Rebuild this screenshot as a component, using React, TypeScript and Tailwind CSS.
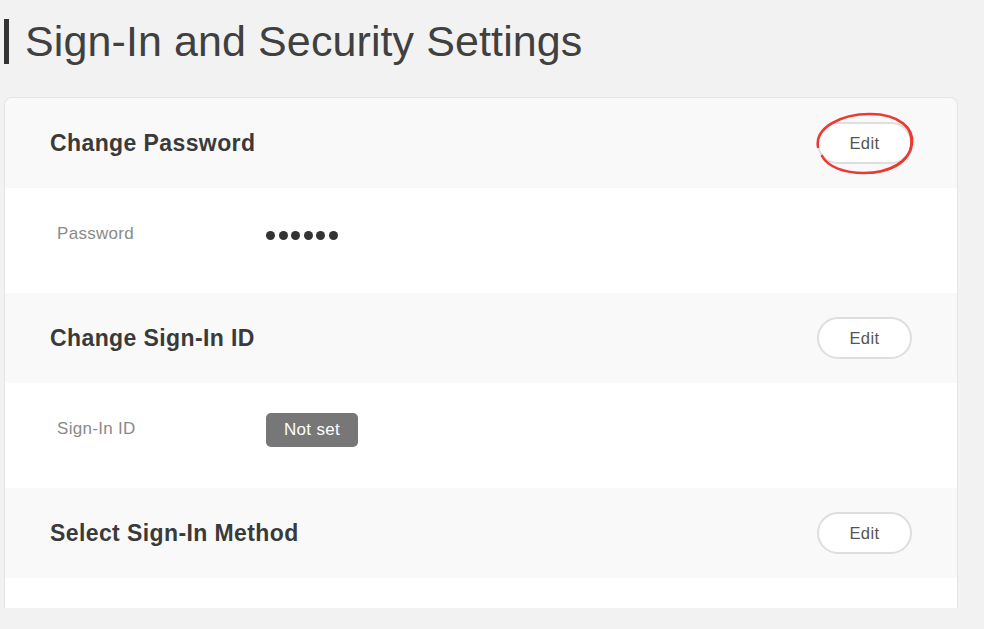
import React from "react";

function EditButton({ circled }: { circled?: boolean }) {
  return (
    <div className="relative">
      <button className="w-[95px] h-[42px] rounded-full border-2 border-[#dedede] bg-white text-[16.5px] text-[#555] tracking-[0.4px]">
        Edit
      </button>
      {circled && (
        <svg
          className="absolute left-[-3px] top-[-11px] pointer-events-none"
          width="102"
          height="66"
          viewBox="0 0 102 66"
        >
          <path
            d="M4 36 C 1 17, 26 3, 56 3 C 86 3, 100 18, 98 33 C 96 50, 76 62, 50 62 C 30 62, 14 56, 8 45"
            fill="none"
            stroke="#ea3a32"
            strokeWidth="2.6"
            strokeLinecap="round"
          />
          <path
            d="M92 15 C 99 24, 99 37, 92 47 C 84 57, 70 61, 56 62"
            fill="none"
            stroke="#ea3a32"
            strokeWidth="2"
            strokeLinecap="round"
          />
        </svg>
      )}
    </div>
  );
}

function Header({ title, circled }: { title: string; circled?: boolean }) {
  return (
    <div className="h-[90px] bg-[#f9f9f9] flex items-center justify-between pl-[45px] pr-[45px]">
      <h2 className="text-[23px] font-bold text-[#3a3a3a] tracking-[0.4px]">{title}</h2>
      <EditButton circled={circled} />
    </div>
  );
}

function Row({ label, children }: { label: string; children: React.ReactNode }) {
  return (
    <div className="h-[105px] bg-white flex items-start pl-[52px] pt-[24px]">
      <div className="w-[209px] h-[44px] flex items-center text-[17px] text-[#8a8a8a] tracking-[0.3px]">
        {label}
      </div>
      <div className="h-[44px] flex items-center">{children}</div>
    </div>
  );
}

export default function App() {
  return (
    <div className="w-[984px] h-[629px] bg-[#f2f2f2] overflow-hidden font-['Liberation_Sans',Arial,sans-serif]">
      <div className="flex items-center h-[97px] pb-[14px]">
        <div className="ml-[4px] w-[5px] h-[45px] bg-[#333]" />
        <h1 className="ml-[16px] text-[43px] leading-none text-[#404040] tracking-[0.1px]">
          Sign-In and Security Settings
        </h1>
      </div>
      <div className="ml-[4px] w-[954px] rounded-t-[8px] border border-b-0 border-[#e4e4e4] overflow-hidden">
        <Header title="Change Password" circled />
        <Row label="Password">
          <div className="flex gap-[3.5px] pt-[2px]">
            <span className="w-[9px] h-[9px] rounded-full bg-[#333]" />
            <span className="w-[9px] h-[9px] rounded-full bg-[#333]" />
            <span className="w-[9px] h-[9px] rounded-full bg-[#333]" />
            <span className="w-[9px] h-[9px] rounded-full bg-[#333]" />
            <span className="w-[9px] h-[9px] rounded-full bg-[#333]" />
            <span className="w-[9px] h-[9px] rounded-full bg-[#333]" />
          </div>
        </Row>
        <Header title="Change Sign-In ID" />
        <Row label="Sign-In ID">
          <span className="inline-flex items-center justify-center w-[92px] h-[34px] rounded-[5px] bg-[#777] text-white text-[17px] tracking-[0.3px] mt-[2px]">
            Not set
          </span>
        </Row>
        <Header title="Select Sign-In Method" />
        <div className="h-[30px] bg-white" />
      </div>
    </div>
  );
}
